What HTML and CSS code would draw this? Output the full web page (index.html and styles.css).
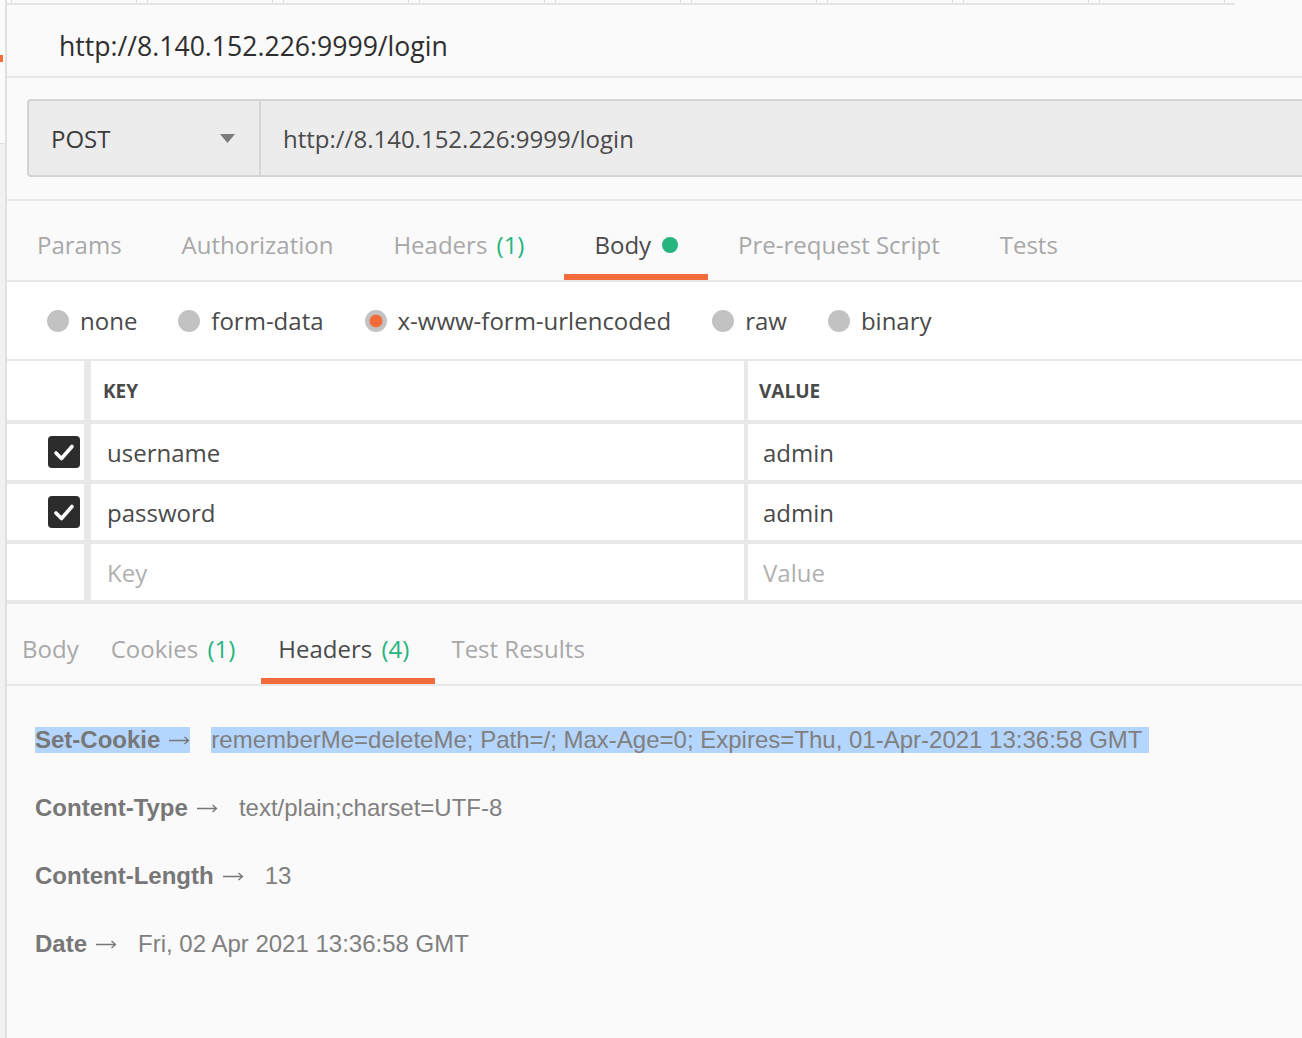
FILE: index.html
```html
<!DOCTYPE html>
<html lang="en">
<head>
<meta charset="utf-8">
<title>Postman request</title>
<link rel="stylesheet" href="styles.css">
</head>
<body>
<div class="app">
  <aside class="gutter">
    <div class="gutter-top"><div class="gutter-mark"></div></div>
  </aside>
  <main class="main">
    <div class="tabstrip">
      <div class="stub"></div><div class="stub"></div><div class="stub"></div>
      <div class="stub"></div><div class="stub"></div><div class="stub"></div>
      <div class="stub"></div><div class="stub"></div><div class="stub"></div>
    </div>

    <div class="titlebar">
      <h1 class="title">http://8.140.152.226:9999/login</h1>
    </div>

    <div class="urlarea">
      <div class="urlbox">
        <div class="method">
          <span>POST</span>
          <svg class="caret" width="15" height="9" viewBox="0 0 15 9"><path d="M0 0H15L7.5 9Z" fill="#7b7b7b"/></svg>
        </div>
        <div class="url">http://8.140.152.226:9999/login</div>
      </div>
    </div>

    <nav class="reqtabs">
      <div class="tab">Params</div>
      <div class="tab">Authorization</div>
      <div class="tab">Headers <span class="count">(1)</span></div>
      <div class="tab active">Body<span class="dot"></span></div>
      <div class="tab">Pre-request Script</div>
      <div class="tab">Tests</div>
    </nav>

    <div class="bodytypes">
      <label class="opt"><span class="radio"></span>none</label>
      <label class="opt"><span class="radio"></span>form-data</label>
      <label class="opt"><span class="radio on"></span>x-www-form-urlencoded</label>
      <label class="opt"><span class="radio"></span>raw</label>
      <label class="opt"><span class="radio"></span>binary</label>
    </div>

    <div class="kv">
      <div class="kv-row head">
        <div class="c-check"></div>
        <div class="c-key">KEY</div>
        <div class="c-val">VALUE</div>
      </div>
      <div class="kv-row">
        <div class="c-check">
          <svg class="check" width="32" height="32" viewBox="0 0 32 32"><rect width="32" height="32" rx="4" fill="#2c2c2c"/><path d="M8 17L13.5 22.5L24 10.5" fill="none" stroke="#fff" stroke-width="3.6" stroke-linecap="round" stroke-linejoin="round"/></svg>
        </div>
        <div class="c-key">username</div>
        <div class="c-val">admin</div>
      </div>
      <div class="kv-row">
        <div class="c-check">
          <svg class="check" width="32" height="32" viewBox="0 0 32 32"><rect width="32" height="32" rx="4" fill="#2c2c2c"/><path d="M8 17L13.5 22.5L24 10.5" fill="none" stroke="#fff" stroke-width="3.6" stroke-linecap="round" stroke-linejoin="round"/></svg>
        </div>
        <div class="c-key">password</div>
        <div class="c-val">admin</div>
      </div>
      <div class="kv-row">
        <div class="c-check"></div>
        <div class="c-key ph">Key</div>
        <div class="c-val ph">Value</div>
      </div>
    </div>

    <nav class="restabs">
      <div class="rtab first">Body</div>
      <div class="rtab">Cookies <span class="count">(1)</span></div>
      <div class="rtab active">Headers <span class="count">(4)</span></div>
      <div class="rtab">Test Results</div>
    </nav>

    <div class="headers">
      <div class="hrow"><span class="hk sel"><b>Set-Cookie</b><svg class="arrow" width="22" height="12" viewBox="0 0 22 12"><path d="M1 6.5H20.5M16.5 3L20.5 6.5L16.5 10" fill="none" stroke="#777" stroke-width="1.3"/></svg></span><span class="hv sel">rememberMe=deleteMe; Path=/; Max-Age=0; Expires=Thu, 01-Apr-2021 13:36:58 GMT&nbsp;</span></div>
      <div class="hrow"><span class="hk"><b>Content-Type</b><svg class="arrow" width="22" height="12" viewBox="0 0 22 12"><path d="M1 6.5H20.5M16.5 3L20.5 6.5L16.5 10" fill="none" stroke="#777" stroke-width="1.3"/></svg></span><span class="hv">text/plain;charset=UTF-8</span></div>
      <div class="hrow"><span class="hk"><b>Content-Length</b><svg class="arrow" width="22" height="12" viewBox="0 0 22 12"><path d="M1 6.5H20.5M16.5 3L20.5 6.5L16.5 10" fill="none" stroke="#777" stroke-width="1.3"/></svg></span><span class="hv">13</span></div>
      <div class="hrow"><span class="hk"><b>Date</b><svg class="arrow" width="22" height="12" viewBox="0 0 22 12"><path d="M1 6.5H20.5M16.5 3L20.5 6.5L16.5 10" fill="none" stroke="#777" stroke-width="1.3"/></svg></span><span class="hv">Fri, 02 Apr 2021 13:36:58 GMT</span></div>
    </div>
  </main>
</div>
</body>
</html>
```

FILE: styles.css
```css
* { box-sizing: border-box; }

html, body {
  margin: 0;
  padding: 0;
  background: #fafafa;
}

body {
  font-family: "Open Sans", "Noto Sans", sans-serif;
  color: #505050;
}

.app {
  display: flex;
  min-height: 1038px;
  width: 1302px;
  overflow: hidden;
}

/* left gutter (edge of sidebar) */
.gutter {
  width: 7px;
  flex: none;
  background: #f1f1f1;
  border-right: 2px solid #e0e0e0;
}
.gutter-top {
  height: 144px;
  background: #fbfbfb;
  border-bottom: 1px solid #e2e2e2;
  padding-top: 55px;
}
.gutter-mark {
  width: 3px;
  height: 7px;
  background: #f26b3a;
}

.main {
  flex: 1;
  min-width: 0;
  overflow: hidden;
  background: #fafafa;
}

/* tab strip remnant at top */
.tabstrip {
  display: flex;
  gap: 10px;
  width: 1228px;
  height: 5px;
  padding-left: 4px;
  border-bottom: 2px solid #e5e5e5;
}
.stub {
  width: 126px;
  height: 3px;
  border-left: 1px solid #dcdcdc;
  border-right: 1px solid #dcdcdc;
}

/* title */
.titlebar {
  height: 73px;
  padding: 23px 0 0 52px;
  border-bottom: 2px solid #e8e8e8;
}
.title {
  margin: 0;
  font-size: 26.6px;
  line-height: 36px;
  font-weight: 400;
  color: #2e2e2e;
}

/* url bar */
.urlarea {
  padding: 21px 0 22px 20px;
  border-bottom: 2px solid #e8e8e8;
}
.urlbox {
  display: flex;
  height: 78px;
  margin-right: -12px;
  background: #ececec;
  border: 2px solid #d4d4d4;
  border-radius: 4px;
}
.method {
  width: 232px;
  flex: none;
  display: flex;
  align-items: center;
  justify-content: space-between;
  padding: 0 24px 0 22px;
  border-right: 2px solid #d6d6d6;
  font-size: 24px;
  color: #3c3c3c;
}
.caret { display: block; }
.url {
  display: flex;
  align-items: center;
  padding-left: 22px;
  font-size: 24px;
  color: #4a4a4a;
}

/* request tabs */
.reqtabs {
  display: flex;
  height: 81px;
  border-bottom: 2px solid #e8e8e8;
}
.tab {
  display: flex;
  align-items: center;
  padding: 8px 30px 0;
  font-size: 24px;
  color: #a8a8a8;
  white-space: pre;
}
.tab.active {
  margin-left: 10px;
  color: #4a4a4a;
  box-shadow: inset 0 -6px 0 #f26b3a;
}
.count {
  margin-left: 3px;
  color: #26b47f;
}
.dot {
  width: 16px;
  height: 16px;
  margin-left: 11px;
  border-radius: 50%;
  background: #26b47f;
}

/* body type radios */
.bodytypes {
  display: flex;
  align-items: center;
  height: 79px;
  padding-left: 40px;
  background: #fff;
  border-bottom: 2px solid #e8e8e8;
}
.opt {
  display: flex;
  align-items: center;
  gap: 11px;
  margin-right: 41px;
  font-size: 24px;
  color: #4a4a4a;
}
.radio {
  width: 22px;
  height: 22px;
  border-radius: 50%;
  background: #c2c2c2;
}
.radio.on {
  background: radial-gradient(circle, #f26b3a 0 6px, #c2c2c2 6.8px);
}

/* key-value table */
.kv-row {
  display: grid;
  grid-template-columns: 77px 660px 1fr;
  height: 60px;
  border-bottom: 4px solid #e8e8e8;
}
.kv-row.head { height: 63px; }
.kv-row > div {
  display: flex;
  align-items: center;
  background: #fff;
  font-size: 24px;
  color: #4a4a4a;
}
.c-check {
  justify-content: flex-end;
  padding-right: 4px;
}
.c-key {
  border-left: 7px solid #e8e8e8;
  padding-left: 16px;
}
.c-val {
  border-left: 4px solid #e8e8e8;
  padding-left: 15px;
}
.head .c-key, .head .c-val {
  font-size: 19px;
  font-weight: 700;
  color: #4a4a4a;
}
.head .c-key { padding-left: 12px; }
.head .c-val { padding-left: 11px; }
.ph { color: #b0b0b0 !important; }
.check { display: block; }

/* response tabs */
.restabs {
  display: flex;
  height: 82px;
  border-bottom: 2px solid #e8e8e8;
}
.rtab {
  display: flex;
  align-items: center;
  padding: 9px 16px 0;
  font-size: 24px;
  color: #a8a8a8;
  white-space: pre;
}
.rtab.first { padding-left: 15px; }
.rtab.active {
  margin-left: 10px;
  padding: 9px 26px 0 17px;
  color: #4a4a4a;
  box-shadow: inset 0 -6px 0 #f26b3a;
}

/* response headers */
.headers {
  padding: 41px 0 0 28px;
  font-family: "Liberation Sans", Arial, sans-serif;
  font-size: 24px;
  color: #808080;
}
.hrow {
  display: flex;
  align-items: center;
  height: 26px;
  margin-bottom: 42px;
  white-space: nowrap;
}
.hk {
  display: inline-flex;
  align-items: center;
  height: 26px;
  color: #777;
}
.hk b { font-weight: 700; }
.arrow {
  display: block;
  margin-left: 8px;
}
.hv {
  margin-left: 21px;
  line-height: 26px;
}
.sel { background: #b4d5fe; }
```
